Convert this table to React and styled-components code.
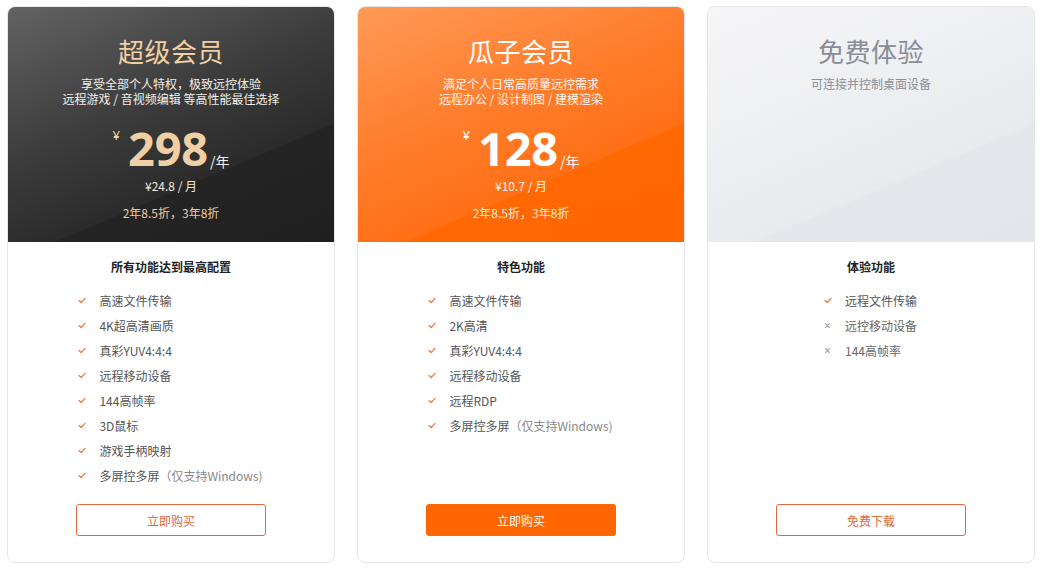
import React from "react";
import styled, { createGlobalStyle, css } from "styled-components";

const Global = createGlobalStyle`
  html, body { margin: 0; padding: 0; background: #fff; }
  body { font-family: "Noto Sans CJK SC", "Noto Sans", sans-serif; }
  * { box-sizing: border-box; }
`;

const Page = styled.div`
  padding: 6px 7px 8px;
  display: grid;
  grid-template-columns: repeat(3, 328px);
  column-gap: 22px;
  height: 571px;
`;

const Card = styled.div`
  display: flex;
  flex-direction: column;
  border: 1px solid #e7e7e9;
  border-radius: 8px;
  overflow: hidden;
  background: #fff;
  height: 557px;
`;

const themes = {
  dark: css`
    background: linear-gradient(157deg, #636363 0%, #3c3c3c 42%, #2b2b2b 68%, #232423 68.5%, #1e1f1e 100%);
    --title: #f1cfa5;
    --sub: #f3efe9;
    --price: #f1cfa5;
    --unit: #f4f0ea;
    --month: #f1e9dd;
    --discount: #efcca2;
  `,
  orange: css`
    background: linear-gradient(157deg, #ff9a57 0%, #ff7d2c 42%, #ff7016 68%, #ff6803 68.5%, #ff6500 100%);
    --title: #ffffff;
    --sub: #fff6ef;
    --price: #ffffff;
    --unit: #ffffff;
    --month: #fff3ea;
    --discount: #ffeede;
  `,
  light: css`
    background: linear-gradient(157deg, #f6f6f8 0%, #eeeff2 42%, #e9eaee 68%, #e6e7ec 68.5%, #e4e5ea 100%);
    --title: #888d96;
    --sub: #8a8f98;
  `,
};

const Header = styled.div`
  height: 235px;
  flex: none;
  display: flex;
  flex-direction: column;
  align-items: center;
  padding-top: 24px;
  ${(p) => themes[p.$variant]}
`;

const Title = styled.div`
  font-size: 26px;
  line-height: 40px;
  color: var(--title);
  letter-spacing: 0.5px;
`;

const Sub = styled.div`
  margin-top: 5px;
  font-size: 12px;
  line-height: 15px;
  color: var(--sub);
  text-align: center;
`;

const PriceRow = styled.div`
  margin-top: 16px;
  display: flex;
  align-items: flex-end;
  height: 50px;
  color: var(--price);
`;

const Yen = styled.span`
  font-size: 13px;
  line-height: 13px;
  align-self: flex-start;
  margin-top: 7px;
  margin-right: 8px;
  font-family: "Noto Sans", sans-serif;
`;

const Amount = styled.span`
  font-family: "Open Sans", "Noto Sans", sans-serif;
  font-weight: 700;
  font-size: 47px;
  line-height: 47px;
  letter-spacing: -0.2px;
`;

const Unit = styled.span`
  font-size: 14px;
  line-height: 14px;
  color: var(--unit);
  margin-left: 2px;
  margin-bottom: 4px;
`;

const Month = styled.div`
  margin-top: 6px;
  font-size: 12px;
  line-height: 16px;
  color: var(--month);
`;

const Discount = styled.div`
  margin-top: 11px;
  font-size: 12px;
  line-height: 16px;
  color: var(--discount);
`;

const Body = styled.div`
  flex: 1;
  display: flex;
  flex-direction: column;
  align-items: center;
  padding: 17px 0 26px;
`;

const FeatTitle = styled.div`
  font-size: 12px;
  line-height: 16px;
  font-weight: 700;
  color: #222;
`;

const List = styled.ul`
  list-style: none;
  margin: 13px 0 0;
  padding: 0;
`;

const Item = styled.li`
  display: flex;
  align-items: center;
  height: 25px;
  font-size: 12px;
  color: ${(p) => (p.$off ? "#666" : "#555")};
`;

const Mark = styled.span`
  width: 8px;
  display: inline-flex;
  justify-content: center;
  margin-right: 13px;
  margin-left: -1px;
`;

const Note = styled.span`
  color: #888;
`;

const Button = styled.button`
  margin-top: auto;
  width: 190px;
  height: 32px;
  border-radius: 3px;
  font-family: inherit;
  font-size: 12px;
  cursor: pointer;
  ${(p) =>
    p.$solid
      ? css`
          background: #ff6600;
          border: 1px solid #ff6600;
          color: #fff;
        `
      : css`
          background: #fff;
          border: 1px solid #e0693a;
          color: #e0693a;
        `}
`;

const Check = () => (
  <svg width="8" height="7" viewBox="0 0 8 7">
    <path d="M1 3.6 L3.2 5.6 L7 1.4" fill="none" stroke="#f0783e" strokeWidth="1.3" strokeLinecap="round" strokeLinejoin="round" />
  </svg>
);

const Cross = () => (
  <svg width="7" height="7" viewBox="0 0 7 7">
    <path d="M1.5 1.5 L5.5 5.5 M5.5 1.5 L1.5 5.5" fill="none" stroke="#a9a9a9" strokeWidth="1.1" strokeLinecap="round" />
  </svg>
);

const plans = [
  {
    variant: "dark",
    title: "超级会员",
    sub: ["享受全部个人特权，极致远控体验", "远程游戏 / 音视频编辑 等高性能最佳选择"],
    price: "298",
    month: "¥24.8 / 月",
    discount: "2年8.5折，3年8折",
    featTitle: "所有功能达到最高配置",
    features: [
      ["高速文件传输"],
      ["4K超高清画质"],
      ["真彩YUV4:4:4"],
      ["远程移动设备"],
      ["144高帧率"],
      ["3D鼠标"],
      ["游戏手柄映射"],
      ["多屏控多屏", "（仅支持Windows)"],
    ],
    button: "立即购买",
  },
  {
    variant: "orange",
    title: "瓜子会员",
    sub: ["满足个人日常高质量远控需求", "远程办公 / 设计制图 / 建模渲染"],
    price: "128",
    month: "¥10.7 / 月",
    discount: "2年8.5折，3年8折",
    featTitle: "特色功能",
    features: [
      ["高速文件传输"],
      ["2K高清"],
      ["真彩YUV4:4:4"],
      ["远程移动设备"],
      ["远程RDP"],
      ["多屏控多屏", "（仅支持Windows)"],
    ],
    button: "立即购买",
    solid: true,
  },
  {
    variant: "light",
    title: "免费体验",
    sub: ["可连接并控制桌面设备"],
    featTitle: "体验功能",
    features: [["远程文件传输"], ["远控移动设备", null, true], ["144高帧率", null, true]],
    button: "免费下载",
  },
];

export default function App() {
  return (
    <>
      <Global />
      <Page>
        {plans.map((p) => (
          <Card key={p.title}>
            <Header $variant={p.variant}>
              <Title>{p.title}</Title>
              <Sub>
                {p.sub.map((s) => (
                  <div key={s}>{s}</div>
                ))}
              </Sub>
              {p.price && (
                <>
                  <PriceRow>
                    <Yen>¥</Yen>
                    <Amount>{p.price}</Amount>
                    <Unit>/年</Unit>
                  </PriceRow>
                  <Month>{p.month}</Month>
                  <Discount>{p.discount}</Discount>
                </>
              )}
            </Header>
            <Body>
              <FeatTitle>{p.featTitle}</FeatTitle>
              <List>
                {p.features.map(([t, note, off]) => (
                  <Item key={t} $off={off}>
                    <Mark>{off ? <Cross /> : <Check />}</Mark>
                    {t}
                    {note && <Note>{note}</Note>}
                  </Item>
                ))}
              </List>
              <Button $solid={p.solid}>{p.button}</Button>
            </Body>
          </Card>
        ))}
      </Page>
    </>
  );
}
